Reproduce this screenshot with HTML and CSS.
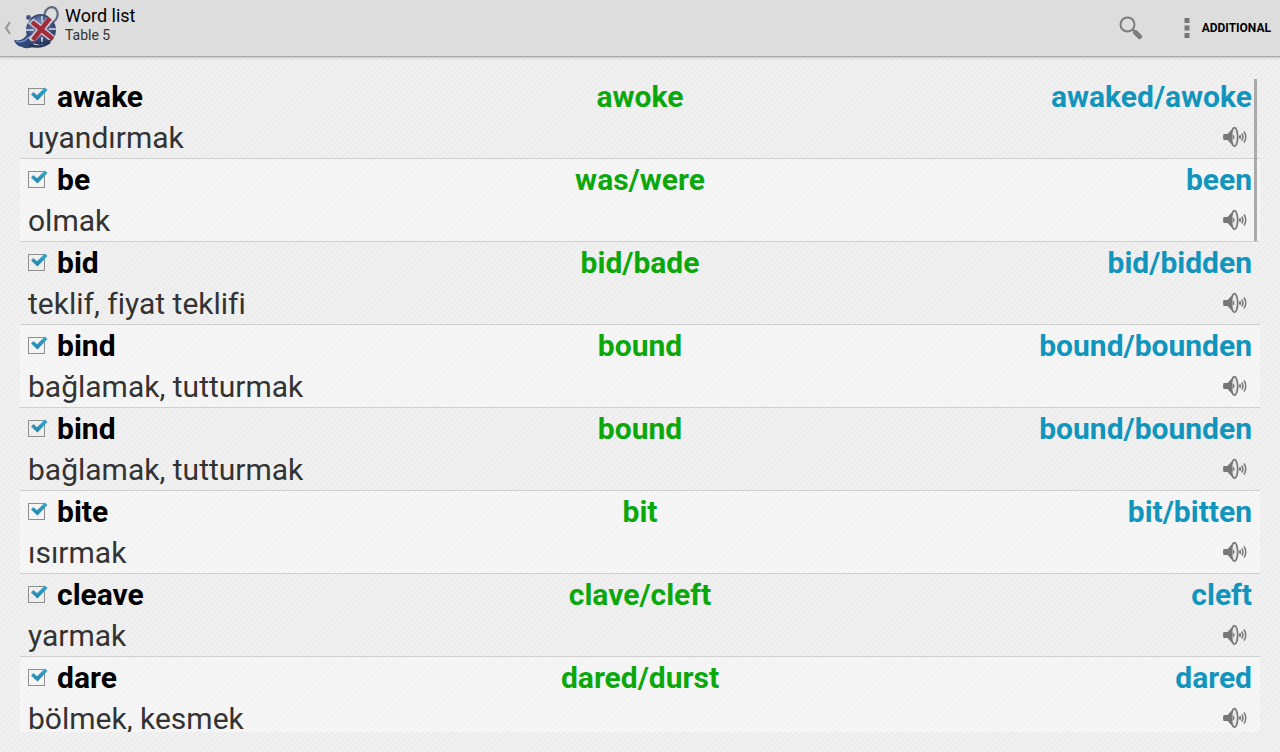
FILE: index.html
```html
<!DOCTYPE html>
<html lang="en">
<head>
<meta charset="utf-8">
<meta name="viewport" content="width=device-width, initial-scale=1">
<title>Word list</title>
<link rel="stylesheet" href="styles.css">
</head>
<body>
<svg class="symbols" aria-hidden="true">
  <linearGradient id="ink" x1="0" y1="0" x2="0" y2="1"><stop offset="0" stop-color="#35a9cf"/><stop offset="1" stop-color="#2583a8"/></linearGradient>
  <symbol id="tick" viewBox="0 0 22 20"><path d="M3 8.500 5.500 6 9 9.300 17 1.500 19.500 4 9.500 14.500z" fill="url(#ink)"/></symbol>
  <symbol id="speaker" viewBox="0 0 26 22">
    <path d="M1.500 8h4l6-6.500v19L5.500 14h-4q-1-3 0-6z" fill="#777"/>
    <ellipse cx="12.500" cy="11" rx="3.200" ry="9.300" fill="#e8e8e8" stroke="#777" stroke-width="1.700"/>
    <path d="M10.500 8q4 3 0 6z" fill="#777"/>
    <path d="M17.500 9.500q1.500 1.500 0 3" fill="none" stroke="#777" stroke-width="2"/>
    <path d="M19.700 7.500q2.500 3.500 0 7M22 5.500q3.500 5.500 0 11" fill="none" stroke="#777" stroke-width="1.500"/>
  </symbol>
</svg>
<header class="bar">
  <a class="home" href="#" aria-label="Navigate up">
    <svg class="back" viewBox="0 0 10 16"><path d="M8 2 4 8l4 6" fill="none" stroke="#999" stroke-width="2.200"/></svg>
    <svg class="logo" viewBox="0 0 46 44">
      <defs>
        <radialGradient id="pot" cx=".45" cy=".35"><stop offset="0" stop-color="#7c94c0"/><stop offset="1" stop-color="#34436f"/></radialGradient>
        <clipPath id="belly"><ellipse cx="27" cy="24" rx="15" ry="15"/></clipPath>
      </defs>
      <ellipse cx="37" cy="9" rx="6.500" ry="8" transform="rotate(18 37 9)" fill="none" stroke="#5d6a80" stroke-width="2.200"/>
      <circle cx="14.500" cy="11.500" r="2.400" fill="#46557f"/>
      <path d="M0 34q9 2 14-7l7 13q-8 4-13 1-6-1-8-7z" fill="#304779"/>
      <path d="M2 35q8 3 13-5" fill="none" stroke="#6b8abd" stroke-width="1.500"/>
      <ellipse cx="27" cy="24" rx="15" ry="15" fill="url(#pot)"/>
      <g clip-path="url(#belly)">
        <path d="M28 8v8M10 24h10M35 23h9M28 31v11M13 16l7 4M13 33l7-4M36 30l6 4" stroke="#b3bed6" stroke-width="2"/>
        <path d="m17 15 23 19M39 10 16 36" stroke="#cfcedb" stroke-width="7"/>
        <path d="m18 16 21 17M36 12 19 34" stroke="#a12c3b" stroke-width="4.500"/>
        <path d="M12 34q13 7 29-1" fill="none" stroke="#2e3b62" stroke-width="2.500"/>
      </g>
      <path d="M17 13q8-7 17-2" fill="none" stroke="#3b4973" stroke-width="1.800"/>
      <path d="M15 39q12 4 21-3" fill="none" stroke="#283659" stroke-width="2.500"/>
    </svg>
    <span class="titles"><span class="title">Word list</span><span class="subtitle">Table 5</span></span>
  </a>
  <button class="search" type="button" aria-label="Search">
    <svg viewBox="0 0 24 24"><circle cx="8.500" cy="8.500" r="7" fill="none" stroke="#7c7c7c" stroke-width="2"/><path d="m13.500 13.500 3 3" stroke="#7c7c7c" stroke-width="2"/><path d="m16.500 16.500 4 4" stroke="#7c7c7c" stroke-width="5" stroke-linecap="round"/></svg>
  </button>
  <button class="more" type="button">
    <svg viewBox="0 0 6 22"><path d="M.5 1h5v5h-5zM.5 8.500h5v5h-5zM.5 16h5v5h-5z" fill="#777"/></svg>
    ADDITIONAL
  </button>
</header>
<main class="page">
  <ul class="words">
    <li class="word"><label class="base"><span class="box"><input class="check" type="checkbox" checked><svg class="tick"><use href="#tick"/></svg></span>awake</label><span class="past">awoke</span><span class="participle">awaked/awoke</span><span class="meaning" lang="tr">uyandırmak</span><button class="speak" type="button" aria-label="Play awake"><svg><use href="#speaker"/></svg></button></li>
    <li class="word"><label class="base"><span class="box"><input class="check" type="checkbox" checked><svg class="tick"><use href="#tick"/></svg></span>be</label><span class="past">was/were</span><span class="participle">been</span><span class="meaning" lang="tr">olmak</span><button class="speak" type="button" aria-label="Play be"><svg><use href="#speaker"/></svg></button></li>
    <li class="word"><label class="base"><span class="box"><input class="check" type="checkbox" checked><svg class="tick"><use href="#tick"/></svg></span>bid</label><span class="past">bid/bade</span><span class="participle">bid/bidden</span><span class="meaning" lang="tr">teklif, fiyat teklifi</span><button class="speak" type="button" aria-label="Play bid"><svg><use href="#speaker"/></svg></button></li>
    <li class="word"><label class="base"><span class="box"><input class="check" type="checkbox" checked><svg class="tick"><use href="#tick"/></svg></span>bind</label><span class="past">bound</span><span class="participle">bound/bounden</span><span class="meaning" lang="tr">bağlamak, tutturmak</span><button class="speak" type="button" aria-label="Play bind"><svg><use href="#speaker"/></svg></button></li>
    <li class="word"><label class="base"><span class="box"><input class="check" type="checkbox" checked><svg class="tick"><use href="#tick"/></svg></span>bind</label><span class="past">bound</span><span class="participle">bound/bounden</span><span class="meaning" lang="tr">bağlamak, tutturmak</span><button class="speak" type="button" aria-label="Play bind"><svg><use href="#speaker"/></svg></button></li>
    <li class="word"><label class="base"><span class="box"><input class="check" type="checkbox" checked><svg class="tick"><use href="#tick"/></svg></span>bite</label><span class="past">bit</span><span class="participle">bit/bitten</span><span class="meaning" lang="tr">ısırmak</span><button class="speak" type="button" aria-label="Play bite"><svg><use href="#speaker"/></svg></button></li>
    <li class="word"><label class="base"><span class="box"><input class="check" type="checkbox" checked><svg class="tick"><use href="#tick"/></svg></span>cleave</label><span class="past">clave/cleft</span><span class="participle">cleft</span><span class="meaning" lang="tr">yarmak</span><button class="speak" type="button" aria-label="Play cleave"><svg><use href="#speaker"/></svg></button></li>
    <li class="word"><label class="base"><span class="box"><input class="check" type="checkbox" checked><svg class="tick"><use href="#tick"/></svg></span>dare</label><span class="past">dared/durst</span><span class="participle">dared</span><span class="meaning" lang="tr">bölmek, kesmek</span><button class="speak" type="button" aria-label="Play dare"><svg><use href="#speaker"/></svg></button></li>
  </ul>
  <div class="thumb"></div>
</main>
</body>
</html>
```
FILE: styles.css
```css
* { box-sizing: border-box; }

body {
  display: flex;
  flex-direction: column;
  height: 100vh;
  margin: 0;
  font-family: Roboto, sans-serif;
  color: #000;
  background: repeating-linear-gradient(135deg, #ececec 0 2px, #f1f1f1 2px 4px);
}

button {
  padding: 0;
  border: 0;
  background: none;
  font: inherit;
  color: inherit;
}

svg { display: block; }
.symbols { position: absolute; width: 0; height: 0; }

.bar {
  display: flex;
  flex: none;
  align-items: center;
  height: 56px;
  padding: 0 9px 0 2px;
  background: #ddd;
  box-shadow: 0 1px 1px #aaa, 0 2px 3px #ccc;
}

.home {
  display: flex;
  align-items: center;
  margin-right: auto;
  color: inherit;
  text-decoration: none;
}
.back { width: 10px; height: 16px; }
.logo { width: 46px; height: 44px; margin-left: 2px; }
.titles { display: flex; flex-direction: column; margin: 0 0 6px 5px; }
.title { font-size: 18px; line-height: 20px; }
.subtitle { font-size: 14px; line-height: 18px; color: #333; }

.search svg { width: 24px; height: 24px; }
.search { margin-right: 41px; }
.more { display: flex; align-items: center; gap: 12px; font-size: 12px; font-weight: 700; }
.more svg { width: 6px; height: 22px; }

.page {
  position: relative;
  flex: 1;
  min-height: 0;
  padding: 20px;
}

.words {
  height: 100%;
  margin: 0;
  padding: 0;
  overflow: hidden;
  list-style: none;
}

.word {
  display: grid;
  grid-template-columns: 1fr 1fr 1fr;
  padding: 0 8px;
  border-bottom: 1px solid #cfcfcf;
  font-size: 30px;
  line-height: 42px;
}
.word:nth-child(even) { background: rgba(255, 255, 255, 0.4); }

.base, .past, .participle { font-weight: 700; }
.base { display: flex; gap: 7px; }
.past { text-align: center; color: #0ba80b; }
.participle { text-align: right; color: #1295bd; }
.meaning { grid-column: span 2; line-height: 40px; color: #333; }

.box { position: relative; width: 22px; height: 20px; margin-top: 10px; }
.check {
  display: block;
  width: 17px;
  height: 17px;
  margin: 2px 0 0;
  border: 1px solid #8e8e8e;
  appearance: none;
}
.tick { position: absolute; inset: 0; width: 22px; height: 20px; pointer-events: none; }
.check:not(:checked) + .tick { display: none; }

.speak { align-self: start; justify-self: end; margin: 8px 4px 0 0; }
.speak svg { width: 26px; height: 22px; }

.thumb {
  position: absolute;
  top: 23px;
  right: 23px;
  width: 3px;
  height: 162px;
  background: #aaa;
}
```
